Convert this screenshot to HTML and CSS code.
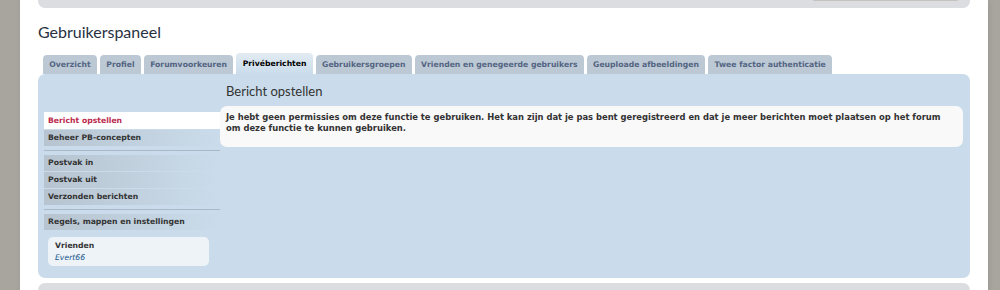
FILE: index.html
```html
<!DOCTYPE html>
<html lang="nl">

<head>
  <meta charset="UTF-8" />
  <title>Gebruikerspaneel</title>
  <link rel="stylesheet" href="styles.css">
</head>

<body>
  <div class="wrap">
    <div class="headerbar">
      <div class="search-edge"></div>
    </div>

    <h2 class="page-title">Gebruikerspaneel</h2>

    <ul class="tabs">
      <li><a href="#">Overzicht</a></li>
      <li><a href="#">Profiel</a></li>
      <li><a href="#">Forumvoorkeuren</a></li>
      <li class="active"><a href="#">Privéberichten</a></li>
      <li><a href="#">Gebruikersgroepen</a></li>
      <li><a href="#">Vrienden en genegeerde gebruikers</a></li>
      <li><a href="#">Geuploade afbeeldingen</a></li>
      <li><a href="#">Twee factor authenticatie</a></li>
    </ul>

    <div class="panel">
      <div class="sidebar">
        <ul class="menu">
          <li class="current"><a href="#">Bericht opstellen</a></li>
          <li><a href="#">Beheer PB-concepten</a></li>
        </ul>
        <hr class="sep" />
        <ul class="menu">
          <li><a href="#">Postvak in</a></li>
          <li><a href="#">Postvak uit</a></li>
          <li><a href="#">Verzonden berichten</a></li>
        </ul>
        <hr class="sep" />
        <ul class="menu">
          <li><a href="#">Regels, mappen en instellingen</a></li>
        </ul>

        <div class="friends">
          <strong>Vrienden</strong>
          <a href="#">Evert66</a>
        </div>
      </div>

      <div class="content">
        <h2>Bericht opstellen</h2>
        <div class="notice">
          Je hebt geen permissies om deze functie te gebruiken. Het kan zijn dat je pas bent geregistreerd en dat je meer berichten moet plaatsen op het forum om deze functie te kunnen gebruiken.
        </div>
      </div>
    </div>

    <div class="footerbar"></div>
  </div>
</body>

</html>
```

FILE: styles.css
```css
html,
body {
  height: 100%;
}

body {
  margin: 0;
  background: #a8a59e;
  font-family: "DejaVu Sans", Verdana, sans-serif;
  font-size: 8px;
  color: #333;
  overflow: hidden;
}

a {
  text-decoration: none;
}

.wrap {
  margin-left: 20px;
  width: 968px;
  min-height: 100%;
  box-sizing: border-box;
  padding: 0 18px;
  background: #fff;
  box-shadow: 1px 0 6px rgba(0, 0, 0, 0.08);
}

.headerbar {
  height: 8px;
  background: #dcdde1;
  border-radius: 0 0 7px 7px;
  display: flex;
  justify-content: flex-end;
  padding-right: 12px;
}

.search-edge {
  width: 145px;
  height: 1px;
  background: #c6c2be;
  border-radius: 0 0 3px 3px;
}

.page-title {
  margin: 0;
  padding: 13px 0 0 0;
  height: 34px;
  box-sizing: border-box;
  font-family: Lato, "Open Sans", sans-serif;
  font-weight: normal;
  font-size: 16px;
  line-height: 21px;
  color: #28313f;
}

.tabs {
  list-style: none;
  margin: 0;
  padding: 11px 0 0 5px;
  display: flex;
  gap: 3px;
  align-items: flex-end;
}

.tabs li a {
  display: block;
  height: 19px;
  line-height: 19px;
  padding: 0 6.3px;
  background: #bcc9d5;
  border-radius: 4px 4px 0 0;
  color: #536482;
  font-weight: bold;
  font-size: 7.7px;
}

.tabs li.active a {
  height: 21px;
  line-height: 21px;
  background: linear-gradient(to bottom, #e2ebf2, #cadceb);
  color: #000;
}

.panel {
  display: flex;
  height: 204px;
  background: #cadceb;
  border-radius: 7px;
  padding: 0 7px 0 6px;
}

.sidebar {
  width: 176px;
  flex-shrink: 0;
  padding-top: 38px;
  font-size: 7.7px;
}

.menu {
  list-style: none;
  margin: 0;
  padding: 0;
  display: flex;
  flex-direction: column;
  gap: 1px;
}

.menu li a {
  display: block;
  height: 16px;
  line-height: 16px;
  padding-left: 4px;
  background: linear-gradient(to right, #b7c4d0, #cadceb);
  color: #333;
  font-weight: bold;
}

.menu li.current a {
  height: 17px;
  line-height: 17px;
  background: #fff;
  color: #bc2a4d;
}

.sep {
  margin: 4px 0;
  border: none;
  height: 1px;
  background: #a9b9c8;
}

.friends {
  margin: 7px 11px 0 4px;
  padding: 3px 7px 2px;
  height: 29px;
  box-sizing: border-box;
  background: #eef3f8;
  border-radius: 5px;
  display: flex;
  flex-direction: column;
  line-height: 12px;
}

.friends strong {
  color: #333;
}

.friends a {
  color: #105289;
  font-style: italic;
}

.content {
  flex: 1;
}

.content h2 {
  margin: 0;
  padding: 10px 0 0 6px;
  height: 32px;
  font-family: Lato, "Open Sans", sans-serif;
  font-weight: normal;
  font-size: 13px;
  line-height: 15px;
  color: #333;
  box-sizing: border-box;
}

.notice {
  background: #f9f9f9;
  border-radius: 7px;
  padding: 6px 8px 7px 6px;
  height: 41px;
  box-sizing: border-box;
  font-weight: bold;
  font-size: 8.4px;
  line-height: 11px;
  color: #333;
}

.footerbar {
  margin-top: 5px;
  height: 20px;
  background: #dcdde1;
  border-radius: 7px 7px 0 0;
}
```
